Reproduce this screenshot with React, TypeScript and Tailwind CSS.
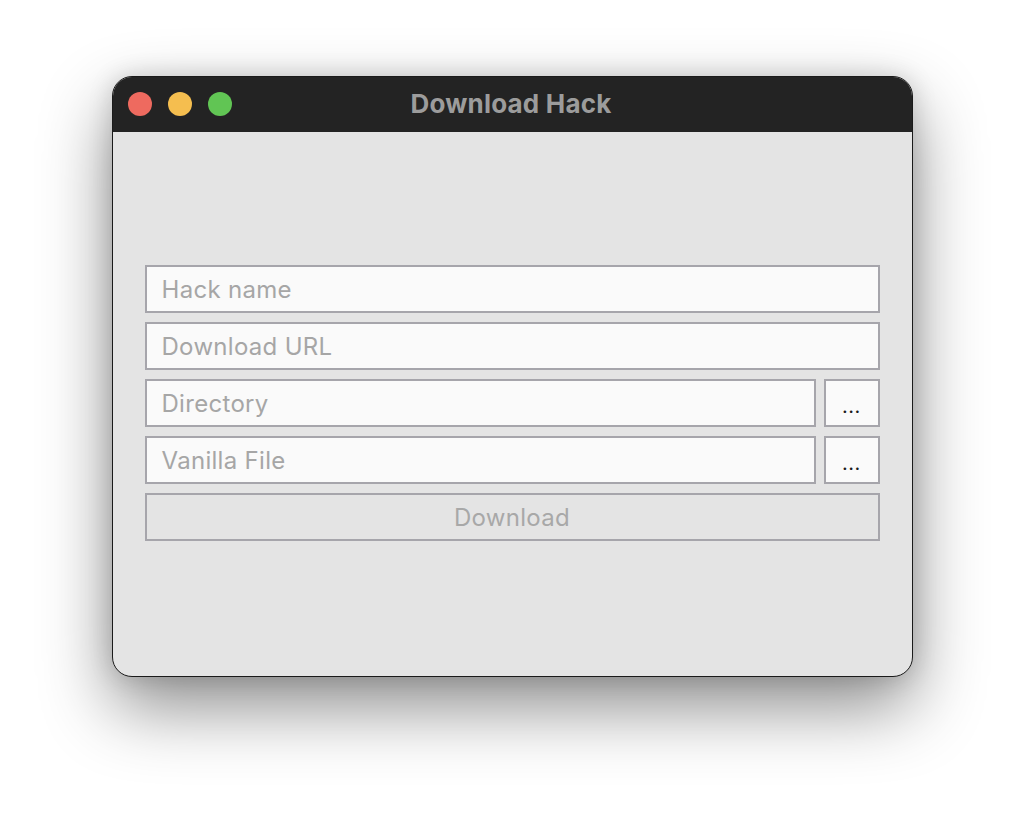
import React from "react";

function Field({ placeholder }: { placeholder: string }) {
  return (
    <div className="flex-1 h-[48px] border-2 border-[#a6a5ab] bg-[#fafafa] flex items-center pl-[15px] text-[24px] tracking-[0.3px] text-[#a6a6a6] pt-[2px]">
      {placeholder}
    </div>
  );
}

function DotsButton() {
  return (
    <div className="w-[56px] h-[48px] border-2 border-[#a6a5ab] bg-[#fafafa] flex items-center justify-center text-[20px] text-[#1a1a1a] pt-[6px] tracking-[0.5px]">
      ...
    </div>
  );
}

export default function App() {
  return (
    <div
      className="w-[1024px] h-[824px] bg-white flex justify-center pt-[76px]"
      style={{ fontFamily: "Inter, 'Noto Sans', sans-serif" }}
    >
      <div className="w-[801px] h-[601px] rounded-[20px] border border-[#1a1a1a] overflow-hidden flex flex-col shadow-[0_30px_70px_rgba(0,0,0,0.45),0_0_25px_rgba(0,0,0,0.15)] bg-[#e4e4e4]">
        <div className="h-[55px] bg-[#232323] relative flex items-center justify-center shrink-0">
          <div className="absolute left-[15px] top-[15px] flex gap-[16px]">
            <div className="w-[24px] h-[24px] rounded-full bg-[#ee6a5f]" />
            <div className="w-[24px] h-[24px] rounded-full bg-[#f5be4f]" />
            <div className="w-[24px] h-[24px] rounded-full bg-[#61c554]" />
          </div>
          <span className="text-[26px] font-bold text-[#9c9c9c] ml-[-2px] mt-[-3px] tracking-[0.2px]">Download Hack</span>
        </div>
        <div className="flex-1 flex flex-col justify-center px-[32px] gap-[9px] pb-[2px]">
          <div className="flex"><Field placeholder="Hack name" /></div>
          <div className="flex"><Field placeholder="Download URL" /></div>
          <div className="flex gap-[8px]"><Field placeholder="Directory" /><DotsButton /></div>
          <div className="flex gap-[8px]"><Field placeholder="Vanilla File" /><DotsButton /></div>
          <div className="h-[48px] border-2 border-[#a6a5ab] flex items-center justify-center text-[24px] tracking-[0.3px] text-[#a8a8a8] pt-[2px]">
            Download
          </div>
        </div>
      </div>
    </div>
  );
}
